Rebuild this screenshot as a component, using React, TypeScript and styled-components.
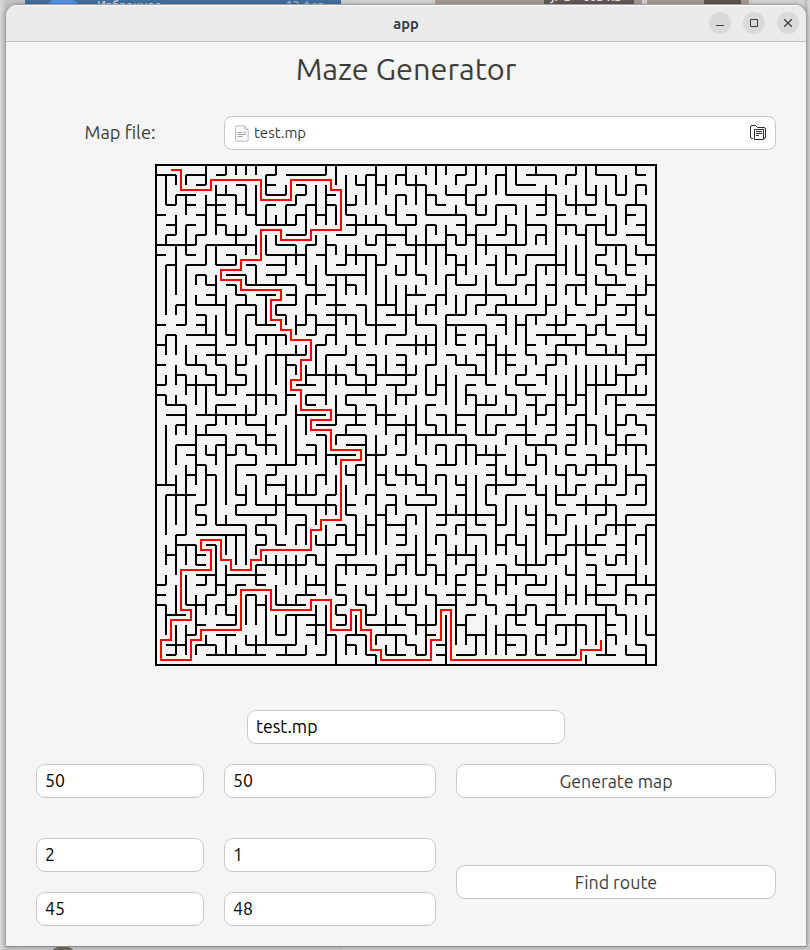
import React from 'react';
import styled, { createGlobalStyle } from 'styled-components';

const GlobalStyle = createGlobalStyle`
  *, *::before, *::after { box-sizing: border-box; }
  html, body { margin: 0; padding: 0; }
  body {
    width: 810px;
    height: 950px;
    overflow: hidden;
    font-family: 'Ubuntu', 'Noto Sans', 'Open Sans', sans-serif;
    color: #3d3d3d;
  }
`;

/* ---------- maze data ---------- */

// The maze is stored in square sections of 17 cells. Every entry of `h` is a
// grid row and every entry of `v` a grid column, listing its walls as start-end.
interface Section {
  x: number;
  y: number;
  h: string;
  v: string;
}

const SECTIONS: Section[] = [
  {
    x: 0,
    y: 0,
    h: '|0-2 3-5 6-7 11-12 13-17|4-5 8-9 11-12 14-15|2-4 6-8 11-13 14-15|1-2 3-4 5-7 8-9 11-12 13-14 15-16|0-1 4-5 6-7 9-10 14-15 16-17|1-2 3-4 6-7 10-14|1-2 4-5 7-9 13-15|0-4 5-10 12-14 15-16|0-1 3-4 7-8 11-15 16-17|1-2 3-5 6-8 9-10 11-13|4-5 7-9 11-13 14-15|5-6 7-8 9-14 15-16|5-6 8-9 10-12 13-14 15-17|2-3 4-7 8-10 12-14|4-5 9-10 12-13 15-16|0-1 2-3 4-5 10-12 14-15 16-17',
    v: '|1-4 7-8 10-15|1-2 3-4 5-7 8-13 14-15|1-2 3-5 6-9 10-16|7-8 11-12 13-14|0-2 3-7 8-10 11-12 15-17|2-7 8-10 11-14 15-17|0-1 2-3 6-7 13-17|0-1 3-5 6-8 9-10 12-13 14-17|0-1 2-5 6-7 8-9 11-12 13-14 15-17|0-1 2-6 7-9 10-12 14-16|1-3 4-6 7-9 13-16|0-1 5-6 7-8 11-12 14-15|2-3 4-6 9-11 15-16|3-4 5-6 8-10 12-14 15-17|2-3 4-7 8-12 13-16|2-6 7-8 10-14 15-17',
  },
  {
    x: 17,
    y: 0,
    h: '|4-5 7-8 13-14|3-4 5-6 8-10 14-15|0-1 7-8 10-11 12-14 15-16|0-1 2-3 11-12 14-15|2-3 6-7 8-9 10-14 15-16|2-6 7-9 10-11 13-14 15-17|1-3 5-8 12-13 14-15|0-1 4-5 6-7 8-12 13-14 15-17|2-5 7-9 12-13|1-2 5-6 13-14 16-17|0-4 7-8 9-10 12-13|0-1 2-3 13-15|8-10 11-12 14-17|0-2 3-4 5-7 10-11 15-16|0-3 6-9 12-14 16-17|0-1 4-7 9-11 12-16',
    v: '0-1 2-6 7-11|0-2 4-6 8-9 11-17|1-5 8-10 11-13 15-16|1-2 3-4 5-7 8-10 12-13 15-17|1-4 5-6 7-8 9-13 14-16|0-4 5-6 7-8 9-17|1-3 4-5 6-10 11-14|1-2 3-6 10-11 12-15|0-2 3-4 6-8 9-11 12-17|1-4 5-6 7-11 12-13 14-16|0-1 2-5 6-10 11-12 14-15|0-2 3-4 6-7 8-12 13-15 16-17|0-1 2-3 6-10 11-14 15-17|1-2 4-5 7-8 9-12 13-15 16-17|0-1 2-4 5-8 9-11 13-15|0-2 3-5 6-10 11-12 14-15|0-1 2-3 4-5 7-9 11-14 16-17',
  },
  {
    x: 34,
    y: 0,
    h: '|0-1 3-6 7-8 10-12 14-15|2-4 14-15|1-6 9-10 12-13|0-2 4-5 7-10 11-12 13-15|4-5 6-7 9-10 13-14|1-2 3-5 6-8 9-11 14-15|0-1 4-5 8-9 11-12 13-15|0-3 10-13 15-16|1-2 3-6 10-11 14-16|4-7 10-11 13-14|2-3 8-9 11-12 13-14|0-2 3-4 5-6 7-9 10-13 15-16|0-1 11-12 13-15|0-4 5-6 8-9 10-11 12-14|0-1 3-5 7-8 9-10 12-13 15-16|0-1 2-3 5-7 8-9 10-11 12-14',
    v: '1-3 4-6 9-12 14-15|0-3 5-7 8-11 13-14 15-17|0-2 4-5 6-8 9-10 11-12 13-14 15-17|4-8 9-11 12-13 15-17|0-1 7-8 10-14 15-16|2-5 6-8 10-11 13-15|1-2 3-14 15-17|1-2 3-4 6-7 8-11 12-13 14-16|0-1 2-5 6-7 8-11 12-14|0-3 4-5 6-13 16-17|0-1 2-4 6-8 9-10 11-12 13-15 16-17|2-4 5-7 8-9 10-11 12-14 15-17|1-3 4-7 8-10 11-12|1-3 4-6 8-11 14-15|0-1 2-4 8-9 12-17|2-3 4-8 9-10 11-13 14-15 16-17',
  },
  {
    x: 0,
    y: 17,
    h: '1-2 3-6 7-8 10-13 15-16|0-1 4-6 7-8 9-10 16-17|5-7 11-15|0-1 3-5 6-7 8-9 13-14|2-3 5-6 8-9 15-17|0-1 3-6 7-9 14-16|0-1 6-7 9-12 13-14 15-17|1-3 6-8 15-16|1-3 4-10 12-13 14-17|2-3 5-6 9-11 16-17|4-7 8-10 11-12 16-17|2-4 6-7 8-9 10-12 15-16|3-4 5-6 7-8 9-10 14-16|4-5 8-10 11-14|3-4 5-6 9-10 11-12 16-17|0-2 11-13|1-4 8-9 13-16',
    v: '|0-2 4-5 6-7 9-15 16-17|0-2 3-5 6-7 9-10 11-13 14-17|1-3 4-6 7-10 13-17|2-3 4-7 9-15|3-4 5-8 9-10 11-12 13-17|0-3 4-6 7-9 11-13 14-17|3-6 8-9 10-17|0-1 2-4 5-6 8-9 11-12 13-16|0-1 2-3 4-5 7-9 11-12 15-17|0-2 3-8 10-11 12-13 14-17|0-1 2-7 8-12 14-16|0-5 6-7 8-9 11-12 13-14 16-17|0-1 2-8 9-13 14-17|1-2 3-4 7-13 14-17|1-2 3-5 6-7 8-10 12-13 14-16|1-4 11-13 14-16',
  },
  {
    x: 17,
    y: 17,
    h: '0-1 2-4 6-8 13-14 15-16|3-4 7-11 13-14 16-17|0-2 4-5 7-8 12-13 15-16|2-3 4-5 7-8 10-11 13-15|0-2 3-4 5-9 14-16|2-5 6-8 11-12 14-15 16-17|2-5 7-9 10-11 14-15|2-3 4-5 10-11 15-17|1-4 5-7 11-12 13-15 16-17|0-1 2-4 6-9 10-11 13-14|1-4 7-8 9-14 15-17|2-4 11-12 13-15|0-3 4-6 7-8 15-17|3-4 9-10 11-13 16-17|2-3 5-6 7-9 11-12 16-17|6-7 9-10 13-14 16-17|0-1 4-5 6-7 9-11 13-14',
    v: '0-1 2-7 10-15 16-17|0-1 3-5 6-9 10-11 12-13 14-16|1-2 4-5 6-7 9-10 13-14 15-17|0-1 2-4 7-9 13-16|4-6 10-15 16-17|0-1 2-5 7-9 10-17|0-1 2-4 6-10 11-12 13-15|5-7 10-11 13-14 16-17|2-5 6-7 8-12 13-15 16-17|0-2 3-4 5-6 7-11 12-13 14-15|0-2 3-6 7-9 10-12 13-16|0-3 4-6 9-10 11-12 14-15 16-17|0-1 3-7 8-10 11-13 14-17|0-1 2-3 4-10 11-13 14-15|2-3 5-7 10-13 14-17|0-1 3-4 6-10 11-13 14-17|0-5 6-7 8-10 11-12 15-17',
  },
  {
    x: 34,
    y: 17,
    h: '4-8 9-10 11-12 14-15|3-4 6-9 10-11 13-15|0-2 3-4 5-7 9-13 14-16|1-2 5-6 14-15|2-3 4-5 12-14|2-4 9-12|1-2 3-5 6-7 8-9 11-15|3-4 5-6 7-8 12-13 14-16|0-2 4-5 8-9 13-14 15-16|0-1 2-3 5-6 7-8 9-10 12-13 14-15|1-4 5-6 7-8 11-12 13-14|3-6 7-8 12-15|0-1 4-5 7-8 9-10 11-12|3-4 7-8 9-12 15-16|1-3 6-7 8-9 13-15|0-2 3-4 8-9 10-12 14-15|1-3 4-5 6-8 12-13',
    v: '0-4 6-7 9-10 11-16|1-4 5-6 7-8 10-11 13-14 16-17|0-1 4-5 6-8 11-15|0-2 3-4 5-6 8-11 12-13|2-3 6-9 11-13 14-16|0-1 3-5 7-8 10-11 12-14 15-17|1-3 4-10 11-12 13-14 15-17|0-1 2-3 4-8 11-12 13-16|1-2 3-7 8-11 13-14 15-16|0-2 3-11 13-14 16-17|3-8 9-11 12-14 15-16|1-2 3-5 6-7 8-10 11-13 14-15 16-17|1-2 3-5 6-12 13-15|0-3 4-6 8-9 10-12 13-16|3-4 5-6 8-9 11-14 15-16|0-1 2-4 5-6 9-10 11-12 14-17',
  },
  {
    x: 0,
    y: 34,
    h: '4-5 8-9 10-13 14-17|4-5 8-12 13-15|4-5 6-9 10-12 14-15|2-3 4-9 10-11|2-4 5-6 10-11 12-13 16-17|1-2 4-5 15-16|4-5 10-15 16-17|4-6 7-11|0-1 4-5 6-7 8-9 10-11 15-17|0-1 5-6 7-8 9-10 14-16|0-1 3-5 6-7 10-11 12-15|1-3 7-8 13-16|4-5 6-8 15-17|3-4 6-8 12-13 15-16|1-3 4-6 9-14|1-2 5-11 12-15 16-17',
    v: '|0-3 4-6 7-8 10-13|0-2 3-7 8-11 12-15|0-3 4-6 7-10 12-15|0-1 4-6 9-13 14-15|1-2 7-8 9-11 13-14|0-2 4-9 10-11 14-15|1-2 3-5 6-11 13-15|0-1 3-6 8-9 10-12 14-15|2-6 9-12 13-14|2-3 4-5 6-8 9-12 13-15|1-2 3-4 5-6 9-14|0-1 2-4 5-7 8-10 11-13|0-3 5-8 9-10 11-13 14-15|2-4 5-8 9-10 11-14|1-4 5-6 7-9 14-15|0-2 3-4 5-6 7-8 10-14',
  },
  {
    x: 17,
    y: 34,
    h: '0-1 2-3 6-7 8-11 16-17|2-3 5-6 8-9 11-17|1-2 4-5 6-8 11-12 13-14 15-16|1-2 3-4 7-8 11-12 14-16|0-1 2-3 7-8|1-3 7-9 10-11 12-15|1-5 7-8 10-11 14-15|4-5 6-7 9-10 11-12 13-14 15-16|1-2 13-14 15-16|1-2 4-5 6-8 10-11 12-14 15-16|1-2 3-4 7-9 11-13 14-15 16-17|1-2 4-5 8-9 14-15|1-2 4-8 9-11 13-14|0-1 2-4 5-8 10-11 14-16|2-3 8-9 11-12|4-5 6-8 9-10 11-12 13-15',
    v: '0-1 2-9 10-15|0-1 3-4 6-9 10-11 13-16|0-1 2-4 5-7 9-10 11-12 13-15|1-5 6-7 8-10 11-13 14-15|1-5 8-9 10-12 13-15|0-5 6-7 8-11 13-14 15-16|0-4 5-8 10-13 14-15|0-1 6-7 8-10 11-12 13-15|1-4 5-7 8-9 10-11 13-14|1-2 3-7 8-10 11-13 14-15|0-7 8-9 10-15|3-4 6-8 9-12|0-2 3-8 11-16|0-1 2-3 4-6 7-14|0-5 6-7 11-14|0-2 4-10 13-15|3-5 6-7 9-10 11-15',
  },
  {
    x: 34,
    y: 34,
    h: '6-7 8-12 13-15|3-4 5-6 7-8 10-11 13-16|0-1 3-4 11-14 15-16|1-2 5-7 10-11 14-15|0-1 2-3 7-11 12-13|5-7 9-10 12-13|0-1 2-5 9-10 11-12|1-4 7-8 9-10 11-14|0-1 3-5 10-11 13-16|3-6 7-8 9-12 13-14 15-16|1-2 3-4 5-6 10-12|1-3 5-7 8-11 12-13|2-3 4-5 6-9 11-12|0-3 4-5 11-12 15-16|1-2 6-7 14-15|2-3 4-5 6-8 10-12 13-15',
    v: '0-5 7-9 10-11 12-15|0-2 3-5 6-9 11-15|0-4 5-6 7-8 9-12|0-1 3-7 8-9 10-11 13-15|0-6 7-8 10-12 13-15|0-4 5-6 7-8 11-14|1-2 3-6 7-11 12-13|1-3 4-5 6-7 8-10 12-14|2-10 11-15|0-1 2-5 8-10 12-14 15-16|1-2 3-4 6-10 11-14|0-1 2-3 5-6 10-15|0-3 5-6 7-9 10-11 13-14|1-6 8-10 11-13 14-15|3-4 5-8 9-10 11-14|2-6 7-8 9-10 11-13 14-16',
  },
];

const CELL = 10;

const spans = (line: string) =>
  line.split(' ').filter(Boolean).map((s) => s.split('-').map(Number));

function wallPath(): string {
  const parts: string[] = [];
  for (const { x, y, h, v } of SECTIONS) {
    h.split('|').forEach((line, row) =>
      spans(line).forEach(([a, b]) =>
        parts.push(`M${(x + a) * CELL} ${(y + row) * CELL}H${(x + b) * CELL}`),
      ),
    );
    v.split('|').forEach((line, col) =>
      spans(line).forEach(([a, b]) =>
        parts.push(`M${(x + col) * CELL} ${(y + a) * CELL}V${(y + b) * CELL}`),
      ),
    );
  }
  return parts.join('');
}

// Cells at which the route turns, as column,row.
const ROUTE =
  '1,0 2,0 2,2 5,2 5,1 10,1 10,3 13,3 13,1 17,1 17,2 18,2 18,6 15,6 15,7 12,7 12,6 10,6 10,9 8,9 8,10 6,10 6,11 8,11 8,12 12,12 12,13 11,13 11,15 12,15 12,16 13,16 13,17 15,17 15,19 14,19 14,21 13,21 13,22 14,22 14,24 17,24 17,25 15,25 15,26 17,26 17,28 20,28 20,29 18,29 18,35 16,35 16,36 15,36 15,38 10,38 10,39 9,39 9,40 7,40 7,39 6,39 6,37 4,37 4,38 5,38 5,40 2,40 2,44 3,44 3,45 1,45 1,47 0,47 0,49 3,49 3,47 4,47 4,46 8,46 8,42 11,42 11,44 15,44 15,43 17,43 17,46 19,46 19,44 20,44 20,46 21,46 21,48 22,48 22,49 27,49 27,47 28,47 28,44 29,44 29,49 42,49 42,48 44,48 44,47';

const routePoints = ROUTE.split(' ')
  .map((p) => p.split(',').map((n) => Number(n) * CELL + CELL / 2).join(','))
  .join(' ');

/* ---------- desktop behind the window ---------- */

const Desktop = styled.div`
  position: relative;
  width: 810px;
  height: 950px;
  padding: 4px 3px 3px 5px;
  overflow: hidden;
  background: linear-gradient(90deg, #d9dadb 0, #c4c5c7 6px, #d6d6d6 400px, #d6d6d6 803px, #bcbcbc 806px, #dcdcdc 810px);
`;

const Backdrop = styled.div`
  position: absolute;
  inset: 0;
  overflow: hidden;
`;

const Patch = styled.div<{ $x: number; $w: number; $c: string }>`
  position: absolute;
  top: 0;
  left: ${(p) => p.$x}px;
  width: ${(p) => p.$w}px;
  height: 8px;
  background: ${(p) => p.$c};
`;

const Avatar = styled.div`
  position: absolute;
  left: 42px;
  top: -3px;
  width: 42px;
  height: 42px;
  border-radius: 50%;
  background: #5294e2;
`;

const Snippet = styled.span<{ $x: number; $y: number; $c: string; $s: number }>`
  position: absolute;
  left: ${(p) => p.$x}px;
  top: ${(p) => p.$y}px;
  font: 600 ${(p) => p.$s}px/16px 'Open Sans', sans-serif;
  color: ${(p) => p.$c};
  white-space: nowrap;
`;

const BottomStrip = styled.div`
  position: absolute;
  left: 24px;
  right: 0;
  bottom: 0;
  height: 4px;
  background: linear-gradient(90deg, #c9c9c9 0 317px, #b5b5b5 317px 318px, #cdcdcd 318px);
`;

const Thumb = styled.div`
  position: absolute;
  left: 49px;
  bottom: -20px;
  width: 28px;
  height: 24px;
  border-radius: 50%;
  background: #6f6a5f;
`;

/* ---------- window ---------- */

const Window = styled.main`
  position: relative;
  width: 802px;
  height: 943px;
  border: 1px solid #a2a2a2;
  border-bottom-color: #8c8c8c;
  border-radius: 12px 12px 0 0;
  background: #f5f5f5;
  box-shadow: 0 0 5px rgba(0, 0, 0, 0.25);
  overflow: hidden;
`;

const TitleBar = styled.header`
  display: grid;
  grid-template-columns: 1fr auto 1fr;
  align-items: center;
  height: 37px;
  padding-right: 7px;
  padding-left: 7px;
  background: #ebebeb;
  border-bottom: 1px solid #bfbfbf;
  box-shadow: inset 0 1px #f9f9f9;
`;

const AppName = styled.h1`
  grid-column: 2;
  margin: 1px 0 0;
  font-size: 14.67px;
  line-height: 20px;
  font-weight: 700;
`;

const Controls = styled.div`
  display: flex;
  justify-content: flex-end;
  gap: 12px;
`;

const Control = styled.button`
  display: grid;
  place-items: center;
  width: 22px;
  height: 22px;
  padding: 0;
  border: 0;
  border-radius: 50%;
  background: #dadada;
`;

const Heading = styled.h2`
  margin: 0;
  height: 74px;
  padding-top: 7px;
  font-size: 30.67px;
  line-height: 40px;
  font-weight: 400;
  text-align: center;
`;

const Row = styled.div<{ $gap: number }>`
  display: grid;
  grid-template-columns: 168px 212px 320px;
  column-gap: 20px;
  row-gap: 20px;
  align-items: center;
  padding: 0 30px;
  margin-top: ${(p) => p.$gap}px;
`;

const Label = styled.label`
  height: 34px;
  text-align: center;
  font-size: 18.3px;
  line-height: 32px;
`;

const FilePicker = styled.button`
  grid-column: 2 / 4;
  display: flex;
  align-items: center;
  height: 34px;
  padding: 0 9px;
  border: 1px solid #c9c9c9;
  border-radius: 8px;
  background: #fff;
  color: #3d3d3d;
  font: 15px/20px 'Ubuntu', 'Noto Sans', sans-serif;
`;

const FileName = styled.span`
  flex: 1;
  margin-left: 4px;
  text-align: left;
`;

const MazeArea = styled.div`
  display: flex;
  justify-content: center;
  margin-top: 14px;
  height: 502px;
`;

const Field = styled.input`
  width: 100%;
  min-width: 0;
  height: 34px;
  padding: 0 8px 2px;
  border: 1px solid #c9c9c9;
  border-radius: 9px;
  outline: 0;
  background: #fff;
  color: #000;
  font: 17.7px/24px 'Ubuntu', 'Noto Sans', sans-serif;
`;

const NameRow = styled.div`
  width: 318px;
  margin: 44px auto 0 241px;
`;

const Action = styled.button<{ $tall?: boolean }>`
  grid-column: 3;
  grid-row: ${(p) => (p.$tall ? '1 / 3' : '1')};
  height: 34px;
  padding: 0 0 1px;
  border: 1px solid #c9c9c9;
  border-radius: 9px;
  background: #fff;
  color: #3d3d3d;
  font: 17.8px/24px 'Ubuntu', 'Noto Sans', sans-serif;
`;

const DocumentIcon = () => (
  <svg width="16" height="17" viewBox="0 0 16 17" fill="none">
    <path d="M3 .8h7.5l3.7 3.700v10.200a1.500 1.500 0 0 1-1.500 1.500H3a1.500 1.500 0 0 1-1.500-1.500V2.300A1.500 1.500 0 0 1 3 .8Z" fill="#fafafa" stroke="#bdbdbd" />
    <path d="M10.500.8v2.400a1.200 1.200 0 0 0 1.200 1.200h2.500" fill="#e4e4e4" stroke="#bdbdbd" />
    <path d="M4 7.500h4M4 9.500h8M4 11.500h4.500M9.500 7.500h2.500" stroke="#a0a0a0" />
  </svg>
);

const FolderIcon = () => (
  <svg width="16" height="16" viewBox="0 0 16 16" fill="none" stroke="#2e2e2e">
    <path d="M3 13.500h-1a1.500 1.500 0 0 1-1.500-1.500V2A1.500 1.500 0 0 1 2 .5h3.500l2 2H14A1.500 1.500 0 0 1 15.500 4v8a1.500 1.500 0 0 1-1.500 1.500" />
    <path d="M4.500 4.500h9v10h-9z" />
    <path d="M6 6.500h6M6 8.500h6M6 10.500h3" />
  </svg>
);

const Maze = () => (
  <svg width="502" height="502" viewBox="-1 -1 502 502" fill="none" strokeWidth="2">
    <path d={`M0 0H500V500H0Z${wallPath()}`} stroke="#000" />
    <polyline points={routePoints} stroke="#f00" />
  </svg>
);

export default function App() {
  return (
    <>
      <GlobalStyle />
      <Desktop>
        <Backdrop aria-hidden>
          <Patch $x={25} $w={316} $c="#44709f" />
          <Avatar />
          <Snippet $x={97} $y={-3} $c="#d6dee8" $s={11.5}>Избранное</Snippet>
          <Snippet $x={286} $y={-3} $c="#a9bdd4" $s={11.5}>12 фев</Snippet>
          <Patch $x={435} $w={207} $c="#a99c97" />
          <Patch $x={544} $w={90} $c="#615a58" />
          <Snippet $x={551} $y={-11} $c="#e6e6e6" $s={12}>JPG – 603 КБ</Snippet>
          <Patch $x={647} $w={102} $c="#a99c97" />
          <Patch $x={704} $w={37} $c="#5c5653" />
          <BottomStrip />
          <Thumb />
        </Backdrop>
        <Window>
          <TitleBar>
            <AppName>app</AppName>
            <Controls>
              <Control aria-label="Minimize">
                <svg width="10" height="10" stroke="#3d3d3d"><path d="M1 7.500h8" /></svg>
              </Control>
              <Control aria-label="Maximize">
                <svg width="10" height="10" stroke="#3d3d3d" fill="none"><path d="M1.500 1.500h7v7h-7z" /></svg>
              </Control>
              <Control aria-label="Close">
                <svg width="10" height="10" stroke="#3d3d3d" strokeWidth="1.300"><path d="M1.200 1.200l7.600 7.600M8.800 1.200L1.200 8.800" /></svg>
              </Control>
            </Controls>
          </TitleBar>
          <Heading>Maze Generator</Heading>
          <Row $gap={0}>
            <Label>Map file:</Label>
            <FilePicker>
              <DocumentIcon />
              <FileName>test.mp</FileName>
              <FolderIcon />
            </FilePicker>
          </Row>
          <MazeArea>
            <Maze />
          </MazeArea>
          <NameRow>
            <Field defaultValue="test.mp" />
          </NameRow>
          <Row $gap={20}>
            <Field defaultValue="50" />
            <Field defaultValue="50" />
            <Action>Generate map</Action>
          </Row>
          <Row $gap={40}>
            <Field defaultValue="2" />
            <Field defaultValue="1" />
            <Action $tall>Find route</Action>
            <Field defaultValue="45" />
            <Field defaultValue="48" />
          </Row>
        </Window>
      </Desktop>
    </>
  );
}
